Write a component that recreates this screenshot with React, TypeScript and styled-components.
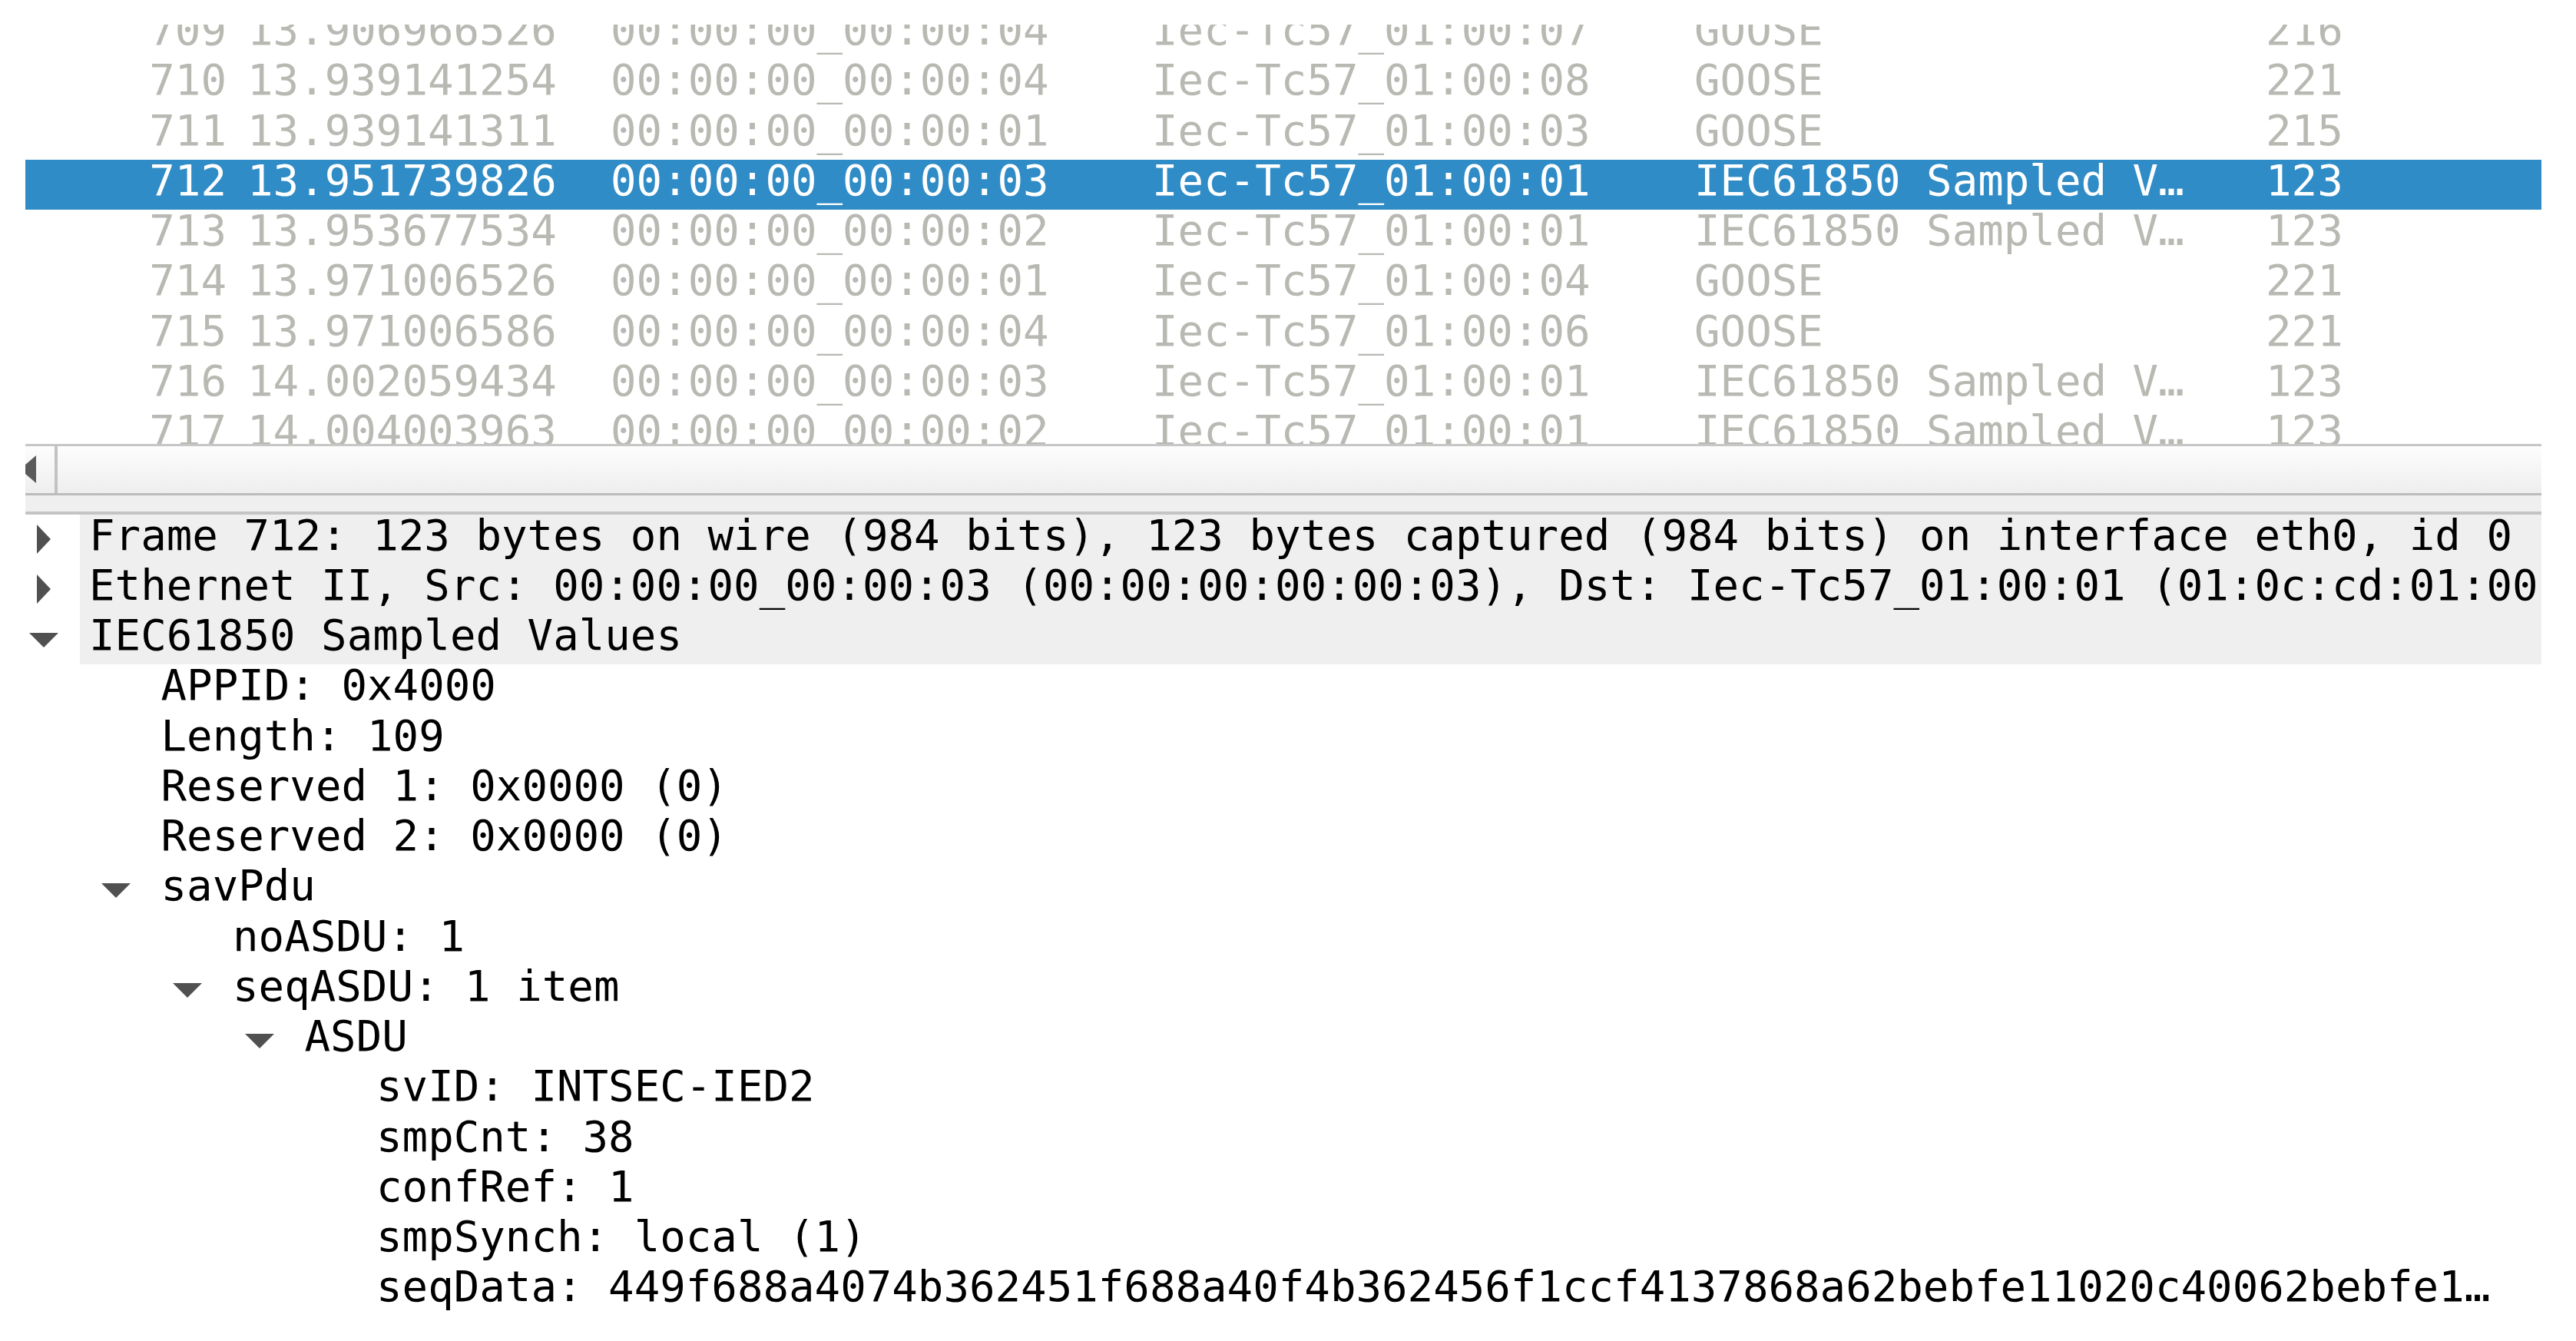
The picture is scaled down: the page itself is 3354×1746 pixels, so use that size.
import React from "react";
import styled, { createGlobalStyle } from "styled-components";

const GlobalStyle = createGlobalStyle`
  html, body { margin: 0; padding: 0; background: #ffffff; }
  body { font-family: "DejaVu Sans Mono", "Liberation Mono", monospace; }
`;

const ROW_H = 65.25;
const INDENT = 93.5;

const Page = styled.div`
  width: 3354px;
  height: 1746px;
  box-sizing: border-box;
  padding: 32px 45px 0 33px;
  background: #ffffff;
  overflow: hidden;
  display: flex;
  flex-direction: column;
`;

const ListViewport = styled.div`
  height: 545.7px;
  overflow: hidden;
  flex: none;
`;

const ListBody = styled.div`
  margin-top: -20px;
  display: flex;
  flex-direction: column;
`;

const PacketRow = styled.div<{ $selected?: boolean }>`
  display: flex;
  height: ${ROW_H}px;
  flex: none;
  font-size: 55.75px;
  line-height: 54px;
  white-space: pre;
  color: ${(p) => (p.$selected ? "#ffffff" : "#b7b9b2")};
  background: ${(p) => (p.$selected ? "#308cc6" : "transparent")};
`;

const Cell = styled.div<{ $w: number; $pad?: number; $right?: boolean }>`
  width: ${(p) => p.$w}px;
  flex: none;
  box-sizing: border-box;
  padding-left: ${(p) => p.$pad ?? 0}px;
  text-align: ${(p) => (p.$right ? "right" : "left")};
  overflow: hidden;
`;

const HScroll = styled.div`
  flex: none;
  height: 61.6px;
  border-top: 3px solid #c6c6c6;
  border-bottom: 3.4px solid #bcbcbc;
  background: linear-gradient(#fdfdfd, #eeeeee);
  display: flex;
  align-items: center;
`;

const ScrollButton = styled.div`
  width: 38px;
  height: 100%;
  flex: none;
  display: flex;
  align-items: center;
  border-right: 4.3px solid #c2c2c2;
`;

const Splitter = styled.div`
  flex: none;
  height: 20.3px;
  background: #efefef;
  border-bottom: 4px solid #c4c4c4;
`;

const Details = styled.div`
  flex: 1;
  display: flex;
  flex-direction: column;
  overflow: hidden;
`;

const TreeRow = styled.div`
  display: flex;
  height: ${ROW_H}px;
  flex: none;
  align-items: stretch;
`;

const Indent = styled.div<{ $level: number }>`
  width: ${(p) => p.$level * INDENT}px;
  flex: none;
`;

const ArrowBox = styled.div`
  width: 38px;
  margin-left: 5px;
  margin-right: 28px;
  flex: none;
  display: flex;
  align-items: center;
`;

const TreeText = styled.div<{ $shaded?: boolean }>`
  flex: 1;
  min-width: 0;
  padding-left: 12px;
  font-size: 55.75px;
  line-height: 54px;
  white-space: pre;
  overflow: hidden;
  color: #000000;
  background: ${(p) => (p.$shaded ? "#efefef" : "transparent")};
`;

const ArrowSvg = styled.svg`
  display: block;
  fill: #505050;
`;

type Arrow = "right" | "down" | undefined;

const Expander: React.FC<{ kind: Arrow }> = ({ kind }) => (
  <ArrowBox>
    {kind === "right" && (
      <ArrowSvg width="38" height="38" viewBox="0 0 38 38">
        <polygon points="10,0 28,19 10,38" />
      </ArrowSvg>
    )}
    {kind === "down" && (
      <ArrowSvg width="38" height="38" viewBox="0 0 38 38">
        <polygon points="0,10 38,10 19,29" />
      </ArrowSvg>
    )}
  </ArrowBox>
);

const packets = [
  ["709", "13.906966526", "00:00:00_00:00:04", "Iec-Tc57_01:00:07", "GOOSE", "216"],
  ["710", "13.939141254", "00:00:00_00:00:04", "Iec-Tc57_01:00:08", "GOOSE", "221"],
  ["711", "13.939141311", "00:00:00_00:00:01", "Iec-Tc57_01:00:03", "GOOSE", "215"],
  ["712", "13.951739826", "00:00:00_00:00:03", "Iec-Tc57_01:00:01", "IEC61850 Sampled V\u2026", "123"],
  ["713", "13.953677534", "00:00:00_00:00:02", "Iec-Tc57_01:00:01", "IEC61850 Sampled V\u2026", "123"],
  ["714", "13.971006526", "00:00:00_00:00:01", "Iec-Tc57_01:00:04", "GOOSE", "221"],
  ["715", "13.971006586", "00:00:00_00:00:04", "Iec-Tc57_01:00:06", "GOOSE", "221"],
  ["716", "14.002059434", "00:00:00_00:00:03", "Iec-Tc57_01:00:01", "IEC61850 Sampled V\u2026", "123"],
  ["717", "14.004003963", "00:00:00_00:00:02", "Iec-Tc57_01:00:01", "IEC61850 Sampled V\u2026", "123"],
];

type Node = { level: number; arrow?: Arrow; text: string; shaded?: boolean };

const tree: Node[] = [
  { level: 0, arrow: "right", shaded: true, text: "Frame 712: 123 bytes on wire (984 bits), 123 bytes captured (984 bits) on interface eth0, id 0" },
  { level: 0, arrow: "right", shaded: true, text: "Ethernet II, Src: 00:00:00_00:00:03 (00:00:00:00:00:03), Dst: Iec-Tc57_01:00:01 (01:0c:cd:01:00:01)" },
  { level: 0, arrow: "down", shaded: true, text: "IEC61850 Sampled Values" },
  { level: 1, text: "APPID: 0x4000" },
  { level: 1, text: "Length: 109" },
  { level: 1, text: "Reserved 1: 0x0000 (0)" },
  { level: 1, text: "Reserved 2: 0x0000 (0)" },
  { level: 1, arrow: "down", text: "savPdu" },
  { level: 2, text: "noASDU: 1" },
  { level: 2, arrow: "down", text: "seqASDU: 1 item" },
  { level: 3, arrow: "down", text: "ASDU" },
  { level: 4, text: "svID: INTSEC-IED2" },
  { level: 4, text: "smpCnt: 38" },
  { level: 4, text: "confRef: 1" },
  { level: 4, text: "smpSynch: local (1)" },
  { level: 4, text: "seqData: 449f688a4074b362451f688a40f4b362456f1ccf4137868a62bebfe11020c40062bebfe1\u2026" },
];

export default function App() {
  return (
    <>
      <GlobalStyle />
      <Page>
        <ListViewport>
          <ListBody>
            {packets.map((p) => (
              <PacketRow key={p[0]} $selected={p[0] === "712"}>
                <Cell $w={262} $right>{p[0]}</Cell>
                <Cell $w={500} $pad={27}>{p[1]}</Cell>
                <Cell $w={705}>{p[2]}</Cell>
                <Cell $w={706}>{p[3]}</Cell>
                <Cell $w={744}>{p[4]}</Cell>
                <Cell $w={300}>{p[5]}</Cell>
              </PacketRow>
            ))}
          </ListBody>
        </ListViewport>
        <HScroll>
          <ScrollButton>
            <svg width="14" height="36" viewBox="0 0 14 36" style={{ display: "block" }}>
              <polygon points="0,12 14,0 14,36 0,24" fill="#5a5a5a" />
            </svg>
          </ScrollButton>
        </HScroll>
        <Splitter />
        <Details>
          {tree.map((n, i) => (
            <TreeRow key={i}>
              <Indent $level={n.level} />
              <Expander kind={n.arrow} />
              <TreeText $shaded={n.shaded}>{n.text}</TreeText>
            </TreeRow>
          ))}
        </Details>
      </Page>
    </>
  );
}
